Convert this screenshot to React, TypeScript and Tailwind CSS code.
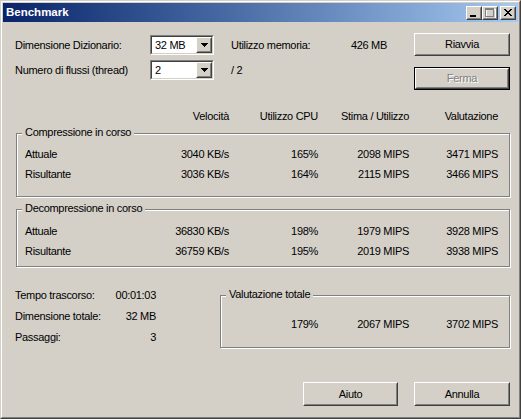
import React from "react";

function Raised({ children, className = "" }: { children?: React.ReactNode; className?: string }) {
  return (
    <div className={"border border-t-white border-l-white border-r-[#404040] border-b-[#404040] " + className}>
      <div className="w-full h-full border border-t-[#d4d0c8] border-l-[#d4d0c8] border-r-[#808080] border-b-[#808080] flex items-center justify-center">
        {children}
      </div>
    </div>
  );
}

function Button({ label, disabled, isDefault, className = "" }: { label: string; disabled?: boolean; isDefault?: boolean; className?: string }) {
  const inner = (
    <Raised className="w-full h-full">
      <span className={disabled ? "text-[#808080] [text-shadow:1px_1px_0_#fff]" : "text-black"}>{label}</span>
    </Raised>
  );
  if (isDefault) {
    return <div className={"border border-black " + className}>{inner}</div>;
  }
  return <div className={className}>{inner}</div>;
}

function Combo({ value }: { value: string }) {
  return (
    <div className="w-[64px] h-[20px] border border-t-[#808080] border-l-[#808080] border-r-white border-b-white">
      <div className="w-full h-full border border-t-[#404040] border-l-[#404040] border-r-[#d4d0c8] border-b-[#d4d0c8] bg-white flex">
        <div className="flex-1 flex items-center pl-[3px]">{value}</div>
        <Raised className="w-[16px] h-full bg-[#d4d0c8]">
          <svg width="7" height="4" viewBox="0 0 7 4" shapeRendering="crispEdges">
            <rect x="0" y="0" width="7" height="1" fill="#000" />
            <rect x="1" y="1" width="5" height="1" fill="#000" />
            <rect x="2" y="2" width="3" height="1" fill="#000" />
            <rect x="3" y="3" width="1" height="1" fill="#000" />
          </svg>
        </Raised>
      </div>
    </div>
  );
}

function TitleButton({ kind }: { kind: "min" | "max" | "close" }) {
  return (
    <Raised className="w-[16px] h-[14px] bg-[#d4d0c8]">
      <svg width="12" height="10" viewBox="0 0 12 10" shapeRendering="crispEdges">
        {kind === "min" && <rect x="2" y="7" width="6" height="2" fill="#000" />}
        {kind === "max" && (
          <g>
            <rect x="2" y="1" width="9" height="9" fill="none" stroke="#fff" strokeWidth="1" />
            <rect x="1.5" y="0.5" width="8" height="8" fill="none" stroke="#808080" strokeWidth="1" />
            <rect x="1" y="1" width="9" height="1" fill="#808080" />
          </g>
        )}
        {kind === "close" && (
          <g fill="#000">
            <rect x="2" y="1" width="2" height="1" />
            <rect x="8" y="1" width="2" height="1" />
            <rect x="3" y="2" width="2" height="1" />
            <rect x="7" y="2" width="2" height="1" />
            <rect x="4" y="3" width="4" height="1" />
            <rect x="5" y="4" width="2" height="1" />
            <rect x="4" y="5" width="4" height="1" />
            <rect x="3" y="6" width="2" height="1" />
            <rect x="7" y="6" width="2" height="1" />
            <rect x="2" y="7" width="2" height="1" />
            <rect x="8" y="7" width="2" height="1" />
          </g>
        )}
      </svg>
    </Raised>
  );
}

function GroupBox({ title, className = "", children }: { title: string; className?: string; children?: React.ReactNode }) {
  return (
    <div className={"relative border border-[#808080] shadow-[inset_1px_1px_0_#fff,1px_1px_0_#fff] " + className}>
      <div className="absolute left-[5px] top-[-8px] px-[3px] bg-[#d4d0c8] leading-[13px]">{title}</div>
      {children}
    </div>
  );
}

const cols = "grid grid-cols-[114px_90px_89px_91px_89px] items-center";

function DataRow({ label, v }: { label: string; v: string[] }) {
  return (
    <div className={cols + " h-[20px]"}>
      <div>{label}</div>
      {v.map((x, i) => (
        <div key={i} className="text-right">{x}</div>
      ))}
    </div>
  );
}

export default function App() {
  return (
    <div className="w-[521px] h-[419px] bg-[#d4d0c8] border border-t-[#d4d0c8] border-l-[#d4d0c8] border-r-[#404040] border-b-[#404040] font-['Liberation_Sans',Arial,sans-serif] text-[11px] tracking-[-0.3px] text-black overflow-hidden leading-none">
      <div className="w-full h-full border border-t-white border-l-white border-r-[#808080] border-b-[#808080] p-px flex flex-col">
        {/* Title bar */}
        <div className="h-[19px] shrink-0 bg-gradient-to-r from-[#0a246a] to-[#a6caf0] flex items-center pl-[3px] pr-[2px]">
          <span className="text-white font-bold text-[11.5px] tracking-normal flex-1">Benchmark</span>
          <div className="flex items-center">
            <TitleButton kind="min" />
            <TitleButton kind="max" />
            <div className="ml-[2px]">
              <TitleButton kind="close" />
            </div>
          </div>
        </div>

        {/* Content */}
        <div className="flex flex-col pl-[12px]">
          {/* Top section */}
          <div className="flex mt-[11px]">
            <div className="flex flex-col gap-px">
              <div className="h-[24px] flex items-center">
                <div className="w-[135px]">Dimensione Dizionario:</div>
                <Combo value="32 MB" />
                <div className="ml-[17px] w-[156px] flex justify-between">
                  <span>Utilizzo memoria:</span>
                  <span>426 MB</span>
                </div>
              </div>
              <div className="h-[24px] flex items-center">
                <div className="w-[135px]">Numero di flussi (thread)</div>
                <Combo value="2" />
                <div className="ml-[17px]">/ 2</div>
              </div>
            </div>
            <div className="flex flex-col gap-[11px] ml-[27px]">
              <Button label="Riavvia" className="w-[96px] h-[23px]" />
              <Button label="Ferma" disabled isDefault className="w-[96px] h-[23px]" />
            </div>
          </div>

          {/* Header */}
          <div className={cols + " h-[20px] mt-[16px] pl-[10px]"}>
            <div></div>
            <div className="text-right">Velocità</div>
            <div className="text-right">Utilizzo CPU</div>
            <div className="text-right">Stima / Utilizzo</div>
            <div className="text-right">Valutazione</div>
          </div>

          {/* Compression */}
          <GroupBox title="Compressione in corso" className="ml-px w-[494px] mt-[7px] pt-[10px] pb-[12px] pl-[8px]">
            <DataRow label="Attuale" v={["3040 KB/s", "165%", "2098 MIPS", "3471 MIPS"]} />
            <DataRow label="Risultante" v={["3036 KB/s", "164%", "2115 MIPS", "3466 MIPS"]} />
          </GroupBox>

          {/* Decompression */}
          <GroupBox title="Decompressione in corso" className="ml-px w-[494px] mt-[12px] pt-[11px] pb-[5px] pl-[8px]">
            <DataRow label="Attuale" v={["36830 KB/s", "198%", "1979 MIPS", "3928 MIPS"]} />
            <DataRow label="Risultante" v={["36759 KB/s", "195%", "2019 MIPS", "3938 MIPS"]} />
          </GroupBox>

          {/* Bottom section */}
          <div className="flex mt-[18px]">
            <div className="w-[141px] flex flex-col gap-px">
              <div className="h-[20px] flex items-center justify-between">
                <span>Tempo trascorso:</span>
                <span>00:01:03</span>
              </div>
              <div className="h-[20px] flex items-center justify-between">
                <span>Dimensione totale:</span>
                <span>32 MB</span>
              </div>
              <div className="h-[20px] flex items-center justify-between">
                <span>Passaggi:</span>
                <span>3</span>
              </div>
            </div>
            <GroupBox title="Valutazione totale" className="ml-[64px] w-[290px] mt-[10px] pt-[18px] pb-[13px]">
              <div className="grid grid-cols-[97px_91px_89px] h-[20px] items-center">
                <div className="text-right">179%</div>
                <div className="text-right">2067 MIPS</div>
                <div className="text-right">3702 MIPS</div>
              </div>
            </GroupBox>
          </div>

          {/* Buttons */}
          <div className="flex mt-[34px] ml-[288px] gap-[16px]">
            <Button label="Aiuto" className="w-[95px] h-[24px]" />
            <Button label="Annulla" className="w-[96px] h-[24px]" />
          </div>
        </div>
      </div>
    </div>
  );
}
